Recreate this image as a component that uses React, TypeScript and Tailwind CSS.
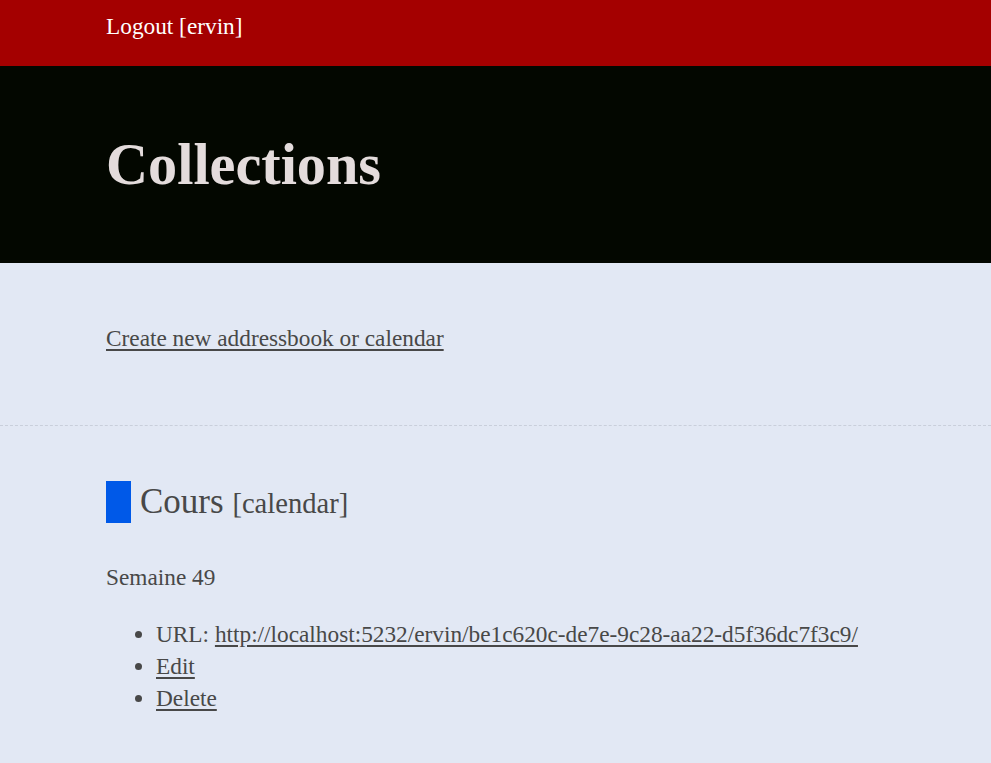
import React from "react";

const App = () => {
  return (
    <div
      className="min-h-screen bg-[#e2e8f4] text-[#484848] text-[23.3px]"
      style={{ fontFamily: '"Liberation Serif", "Times New Roman", serif' }}
    >
      <header className="h-[66px] bg-[#a40000] pl-[106px] pt-[10px] leading-[32px] text-white">
        <a className="cursor-pointer">Logout [ervin]</a>
      </header>

      <div className="h-[197px] bg-[#030700] pl-[106px] pt-[55px]">
        <h1 className="text-[58.25px] font-bold leading-normal text-[#e4dcdc]">Collections</h1>
      </div>

      <section className="h-[163px] border-b border-dashed border-[#c9cfdb] pl-[106px] pt-[59px] leading-[32px]">
        <a className="underline decoration-[#484848] underline-offset-[3px] cursor-pointer">
          Create new addressbook or calendar
        </a>
      </section>

      <section className="pl-[106px] pt-[50px] pb-12">
        <h3 className="flex items-center">
          <span className="mr-[9px] inline-block h-[42px] w-[25px] bg-[#0059e8]"></span>
          <span className="text-[35px] leading-normal">
            Cours <span className="text-[28.6px]">[calendar]</span>
          </span>
        </h3>
        <p className="mt-[32px] leading-[32px]">Semaine 49</p>
        <ul className="mt-[25px] list-disc pl-[50px] leading-[32px]">
          <li>
            URL:{" "}
            <a className="underline underline-offset-[3px] cursor-pointer">
              http://localhost:5232/ervin/be1c620c-de7e-9c28-aa22-d5f36dc7f3c9/
            </a>
          </li>
          <li>
            <a className="underline underline-offset-[3px] cursor-pointer">Edit</a>
          </li>
          <li>
            <a className="underline underline-offset-[3px] cursor-pointer">Delete</a>
          </li>
        </ul>
      </section>
    </div>
  );
};

export default App;
